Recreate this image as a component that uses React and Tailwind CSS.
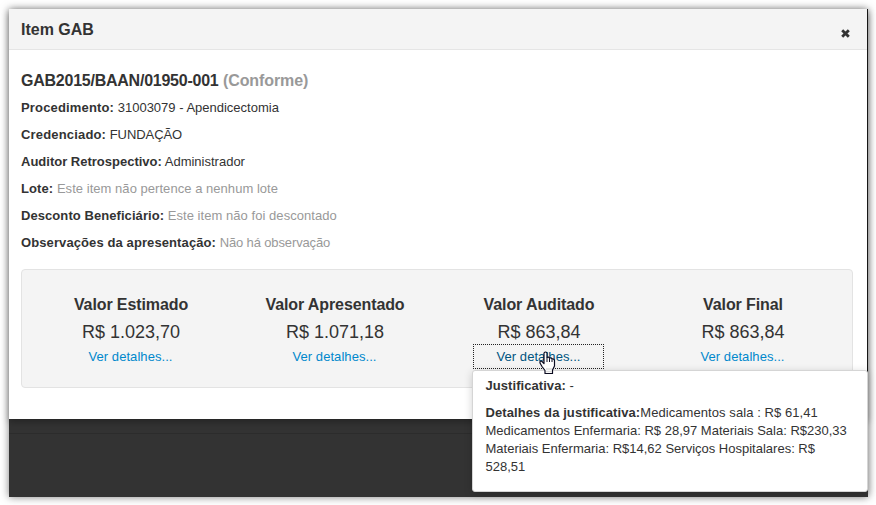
const rows = [
  { label: 'Procedimento:', value: '31003079 - Apendicectomia', labelClass: 'tracking-[0.16px]', valueClass: 'text-[#333]' },
  { label: 'Credenciado:', value: 'FUNDAÇÃO', labelClass: 'tracking-[0.17px]', valueClass: 'text-[#333] tracking-[-0.08px]' },
  { label: 'Auditor Retrospectivo:', value: 'Administrador', labelClass: '', valueClass: 'text-[#333]' },
  { label: 'Lote:', value: 'Este item não pertence a nenhum lote', labelClass: 'tracking-[0.1px]', valueClass: 'text-[#999] tracking-[0.04px]' },
  { label: 'Desconto Beneficiário:', value: 'Este item não foi descontado', labelClass: 'tracking-[0.07px]', valueClass: 'text-[#999] tracking-[0.05px]' },
  { label: 'Observações da apresentação:', value: 'Não há observação', labelClass: 'tracking-[0.1px]', valueClass: 'text-[#999] tracking-[-0.13px]' },
];

const totals = [
  { title: 'Valor Estimado', value: 'R$ 1.023,70' },
  { title: 'Valor Apresentado', value: 'R$ 1.071,18' },
  { title: 'Valor Auditado', value: 'R$ 863,84', active: true },
  { title: 'Valor Final', value: 'R$ 863,84' },
];

function HandCursor() {
  return (
    <svg className="absolute left-[65px] top-[6px] z-20" width="17" height="24" viewBox="0 0 17 24">
      <path
        d="M5 2 Q6.5 0 8 2 V6.5 Q9.7 5.5 10.5 7.2 Q12.2 6.2 13 8 Q15.5 7.5 15.5 10 V15 L13.5 19 V22.5 H6 V19.5 L3 15.5 L1 12 Q.6 9.8 2.5 10 L5 12.5 Z"
        fill="#fff" stroke="#0b0b20" strokeWidth="1.2" strokeLinejoin="round"
      />
      <path d="M8 6.5 V11 M10.5 7.3 V11 M13 8.3 V11" stroke="#0b0b20" strokeWidth="1" />
      <path d="M7 20.5 H13 M7 18 H13" stroke="#ddd" strokeWidth="1.5" />
    </svg>
  );
}

function Popover() {
  return (
    <div className="absolute left-[-2px] top-[25px] z-10 h-[122px] w-[396px] rounded-[3px] border border-[#d5d5d5] bg-white px-[13px] pt-[6px] text-left text-[13px] leading-[18px] text-[#333] shadow-[0_2px_8px_rgba(0,0,0,0.18)]">
      <p className="mb-[9px]"><b className="tracking-[0.06px]">Justificativa:</b> -</p>
      <p className="whitespace-nowrap">
        <b className="tracking-[0.09px]">Detalhes da justificativa:</b><span className="tracking-[0.07px]">Medicamentos sala : R$ 61,41</span><br />
        Medicamentos Enfermaria: R$ 28,97 Materiais Sala: R$230,33<br />
        Materiais Enfermaria: R$14,62 Serviços Hospitalares: R$<br />
        528,51
      </p>
    </div>
  );
}

function Total({ title, value, active }) {
  return (
    <div className="flex w-[204px] flex-col items-center whitespace-nowrap">
      <h4 className="ml-[2px] text-[16px] font-bold leading-[20px] tracking-[-0.1px]">{title}</h4>
      <div className="ml-[2px] mt-[5px] text-[18px] leading-[24px]">{value}</div>
      <div className={`relative flex h-[25px] w-[131px] items-center justify-center border border-dotted ${active ? 'border-[#222]' : 'border-transparent'}`}>
        <a className={`ml-[1px] text-[13px] leading-[18px] tracking-[0.06px] ${active ? 'text-[#005580]' : 'text-[#0088cc]'}`}>Ver detalhes...</a>
        {active && <HandCursor />}
        {active && <Popover />}
      </div>
    </div>
  );
}

export default function App() {
  return (
    <div className="h-[505px] w-[876px] overflow-hidden bg-white p-[9px] font-['Liberation_Sans',Arial,sans-serif] text-[#333]">
      <div className="h-[488px] w-[859px] bg-[#333] shadow-[0_0_8px_rgba(0,0,0,0.5)]">
        <div className="flex h-full flex-col">
          <div className="flex h-[410px] shrink-0 border-r border-[#161616] shadow-[0_3px_7px_rgba(0,0,0,0.3)]">
            <section className="flex w-[858px] flex-col bg-white">
              <header className="flex h-[41px] shrink-0 items-center justify-between border-b border-[#e5e5e5] bg-[#f4f4f4] pl-[12px] pr-[17px]">
                <h3 className="mt-[2px] text-[16px] font-bold leading-[20px]">Item GAB</h3>
                <svg className="mt-[8px]" width="9" height="9" viewBox="0 0 9 9">
                  <path d="M1.2 1.2 L7.8 7.8 M7.8 1.2 L1.2 7.8" stroke="#333" strokeWidth="2.8" />
                </svg>
              </header>
              <main className="flex flex-col px-[12px] pt-[21px]">
                <h4 className="mb-[8px] whitespace-nowrap text-[16px] font-bold leading-[20px]">
                  <span className="tracking-[-0.24px]">GAB2015/BAAN/01950-001</span> <span className="tracking-[-0.1px] text-[#999]">(Conforme)</span>
                </h4>
                {rows.map((r) => (
                  <p key={r.label} className="mb-[9px] whitespace-nowrap text-[13px] leading-[18px]">
                    <b className={r.labelClass}>{r.label}</b> <span className={r.valueClass}>{r.value}</span>
                  </p>
                ))}
                <div className="mt-[8px] flex h-[119px] w-[832px] rounded-[4px] border border-[#e3e3e3] bg-[#f4f4f4] pl-[6px] pt-[25px]">
                  {totals.map((t) => <Total key={t.title} {...t} />)}
                </div>
              </main>
            </section>
          </div>
          <div className="mt-[14px] h-px bg-[#2c2c2c]" />
        </div>
      </div>
    </div>
  );
}
